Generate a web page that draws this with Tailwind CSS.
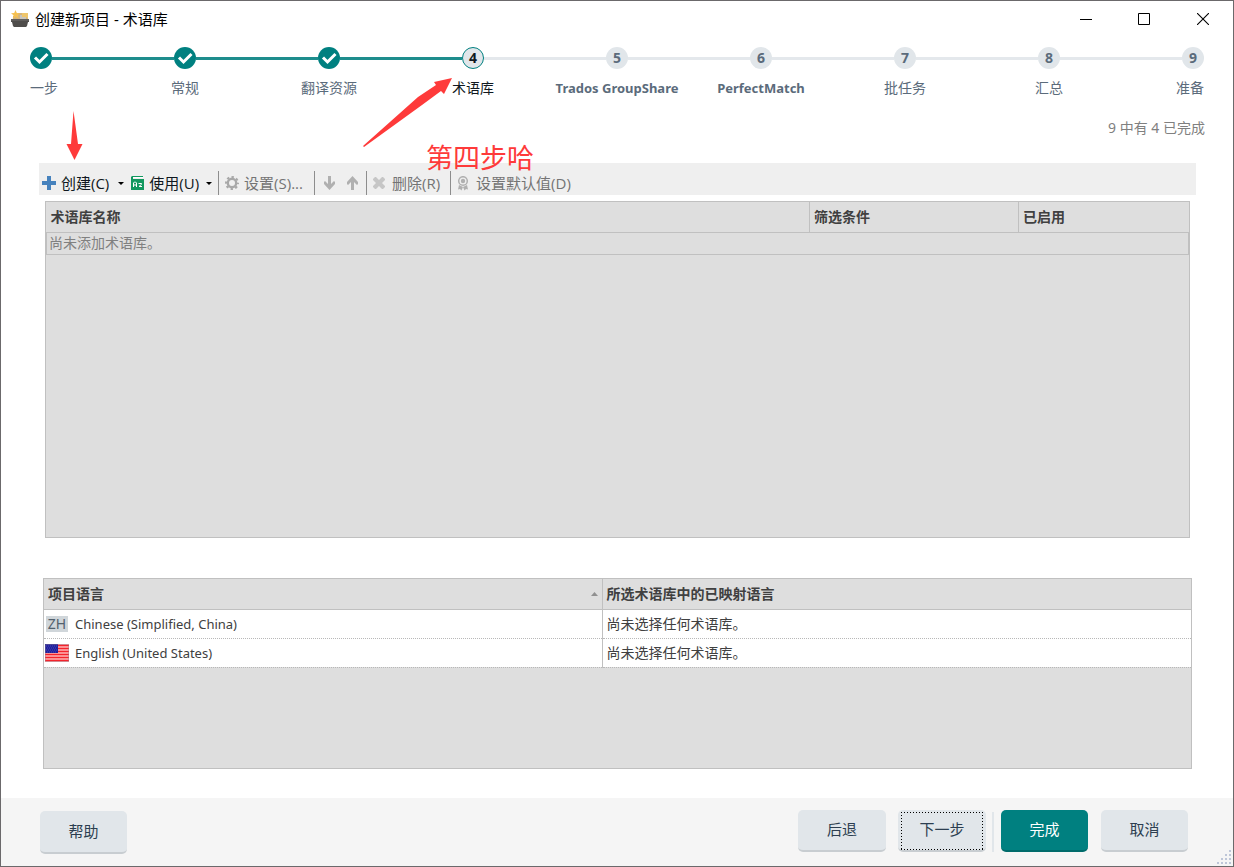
<!DOCTYPE html>
<html lang="zh-CN">
<head>
<meta charset="utf-8">
<meta name="viewport" content="width=device-width, initial-scale=1">
<title>创建新项目 - 术语库</title>
<script src="https://cdn.jsdelivr.net/npm/@tailwindcss/browser@4"></script>
</head>
<body class="bg-white font-['Noto_Sans','Noto_Sans_CJK_SC',sans-serif] text-[14px] leading-5 text-[#404040]">
<div class="relative flex min-h-screen flex-col border border-[#6b696b]">

  <!-- Title bar -->
  <header class="flex h-9 items-center justify-between pr-3 pl-[10px] text-black">
    <div class="flex items-center gap-[6px]">
      <svg class="h-[18px] w-[18px]" viewBox="0 0 18 18" aria-hidden="true">
        <path d="M7 3h9l1 1v7H2V6h4z" fill="#d5b47a"/>
        <path d="M9 5h6v5H9z" fill="#c9c5bd"/><path d="M11 3h6v6l-2-2h-4z" fill="#efc66b"/>
        <path d="M4.500 0l1.300 3 3.200.3-2.400 2 .8 3.200-2.900-1.700-2.800 1.700.8-3.200L0 3.300 3.200 3z" fill="#f5c04f"/>
        <path d="M0 9h18v3h-1l-1 4-1 1H3l-1-1-1-4H0z" fill="#4f4d4b"/><path d="M0 9h18v2H0z" fill="#5f5d5b"/>
      </svg>
      <h1 class="text-[15px]">创建新项目 - 术语库</h1>
    </div>
    <div class="flex">
      <button aria-label="最小化" class="grid w-[58px] place-items-center"><svg class="size-3" viewBox="0 0 12 12"><path d="M0 6.500h12" stroke="#000"/></svg></button>
      <button aria-label="最大化" class="grid w-[58px] place-items-center"><svg class="size-3" viewBox="0 0 12 12"><path d="M.5.5h11v11H.5z" fill="none" stroke="#000"/></svg></button>
      <button aria-label="关闭" class="ml-3 grid w-9 place-items-center"><svg class="size-3" viewBox="0 0 12 12"><path d="M0 0l12 12M12 0L0 12" stroke="#000" stroke-width="1.100"/></svg></button>
    </div>
  </header>

  <!-- Wizard steps -->
  <ol class="mt-[10px] flex pr-[29px] pl-[29px] text-[13px] font-bold text-[#5b6b7b]">
    <li class="flex-1">
      <div class="flex items-center"><svg class="size-[22px]" viewBox="0 0 22 22"><circle cx="11" cy="11" r="11" fill="#008080"/><path d="M5 10.500l4.500 4.500 8-8" fill="none" stroke="#fff" stroke-width="3"/></svg><div class="h-[3px] flex-1 bg-[#1e8d8d]"></div></div>
      <div class="mt-[9px] flex w-[22px] justify-start text-[14px] font-normal whitespace-nowrap">一步</div>
    </li>
    <li class="flex-1">
      <div class="flex items-center"><svg class="size-[22px]" viewBox="0 0 22 22"><circle cx="11" cy="11" r="11" fill="#008080"/><path d="M5 10.500l4.500 4.500 8-8" fill="none" stroke="#fff" stroke-width="3"/></svg><div class="h-[3px] flex-1 bg-[#1e8d8d]"></div></div>
      <div class="mt-[9px] flex w-[22px] justify-center text-[14px] font-normal whitespace-nowrap">常规</div>
    </li>
    <li class="flex-1">
      <div class="flex items-center"><svg class="size-[22px]" viewBox="0 0 22 22"><circle cx="11" cy="11" r="11" fill="#008080"/><path d="M5 10.500l4.500 4.500 8-8" fill="none" stroke="#fff" stroke-width="3"/></svg><div class="h-[3px] flex-1 bg-[#1e8d8d]"></div></div>
      <div class="mt-[9px] flex w-[22px] justify-center text-[14px] font-normal whitespace-nowrap">翻译资源</div>
    </li>
    <li class="flex-1 text-[#101820]" aria-current="step">
      <div class="flex items-center"><span class="grid size-[22px] place-items-center rounded-full border border-[#008080] bg-[#e1e6ea] text-[14px]">4</span><div class="h-[3px] flex-1 bg-[#e4e8ec]"></div></div>
      <div class="mt-[9px] flex w-[22px] justify-center text-[14px] font-normal whitespace-nowrap">术语库</div>
    </li>
    <li class="flex-1">
      <div class="flex items-center"><span class="grid size-[22px] place-items-center rounded-full bg-[#e1e6ea] text-[14px]">5</span><div class="h-[3px] flex-1 bg-[#e4e8ec]"></div></div>
      <div class="mt-[9px] flex w-[22px] justify-center whitespace-nowrap">Trados GroupShare</div>
    </li>
    <li class="flex-1">
      <div class="flex items-center"><span class="grid size-[22px] place-items-center rounded-full bg-[#e1e6ea] text-[14px]">6</span><div class="h-[3px] flex-1 bg-[#e4e8ec]"></div></div>
      <div class="mt-[9px] flex w-[22px] justify-center whitespace-nowrap">PerfectMatch</div>
    </li>
    <li class="flex-1">
      <div class="flex items-center"><span class="grid size-[22px] place-items-center rounded-full bg-[#e1e6ea] text-[14px]">7</span><div class="h-[3px] flex-1 bg-[#e4e8ec]"></div></div>
      <div class="mt-[9px] flex w-[22px] justify-center text-[14px] font-normal whitespace-nowrap">批任务</div>
    </li>
    <li class="flex-1">
      <div class="flex items-center"><span class="grid size-[22px] place-items-center rounded-full bg-[#e1e6ea] text-[14px]">8</span><div class="h-[3px] flex-1 bg-[#e4e8ec]"></div></div>
      <div class="mt-[9px] flex w-[22px] justify-center text-[14px] font-normal whitespace-nowrap">汇总</div>
    </li>
    <li>
      <span class="grid size-[22px] place-items-center rounded-full bg-[#e1e6ea] text-[14px]">9</span>
      <div class="mt-[9px] flex w-[22px] justify-end text-[14px] font-normal whitespace-nowrap">准备</div>
    </li>
  </ol>
  <p class="mt-5 pr-[28px] text-right text-[14px] text-[#808080]">9 中有 4 已完成</p>

  <main class="flex flex-1 flex-col pt-[25px]">
    <!-- Toolbar -->
    <div role="toolbar" class="mr-[37px] ml-[38px] flex h-8 items-center bg-[#efefef] pt-2 font-['Open_Sans','Noto_Sans_CJK_SC',sans-serif] text-[15px] whitespace-nowrap text-[#101820]">
      <button class="flex items-center gap-[5px] pl-[3px]">
        <svg class="size-[14px]" viewBox="0 0 14 14"><path d="M5 0h4v5h5v4H9v5H5V9H0V5h5z" fill="#4682bd"/></svg>
        <span>创建(C)</span>
        <svg class="ml-1 h-[3px] w-[6px]" viewBox="0 0 6 3"><path d="M0 0h6L3 3z" fill="#000"/></svg>
      </button>
      <button class="ml-[7px] flex items-center gap-[5px]">
        <svg class="h-[14px] w-[13px]" viewBox="0 0 13 14"><path d="M1 0h11v1H2v2h11v11H0V1z" fill="#12985f"/><path d="M2 1h10v1H2z" fill="#fff"/><path d="M2.500 11V7l1-1h1l1 1v4M2.500 9h3M7.500 7.500h3v.8L8 10.500h3" fill="none" stroke="#fff"/></svg>
        <span>使用(U)</span>
        <svg class="ml-[2px] h-[3px] w-[6px]" viewBox="0 0 6 3"><path d="M0 0h6L3 3z" fill="#000"/></svg>
      </button>
      <span class="ml-[6px] h-6 w-px bg-[#8d8d8d]"></span>
      <button disabled class="ml-[6px] flex items-center gap-[5px] text-[#747474]">
        <svg class="size-[14px]" viewBox="0 0 14 14"><circle cx="7" cy="7" r="4.200" fill="none" stroke="#a8a8a8" stroke-width="2.400"/><circle cx="7" cy="7" r="6" fill="none" stroke="#a8a8a8" stroke-width="2" stroke-dasharray="2.360 2.352" stroke-dashoffset="1.180"/></svg>
        <span>设置(S)...</span>
      </button>
      <span class="ml-[11px] h-6 w-px bg-[#8d8d8d]"></span>
      <button disabled aria-label="下移" class="ml-[9px]"><svg class="h-[14px] w-[11px]" viewBox="0 0 11 14"><path d="M4 0h3v8l3-3 1 1v2l-5.500 6L0 8V6l1-1 3 3z" fill="#b0b0b0"/></svg></button>
      <button disabled aria-label="上移" class="ml-3"><svg class="h-[14px] w-[11px]" viewBox="0 0 11 14"><path d="M4 14h3V6l3 3 1-1V6L5.500 0 0 6v2l1 1 3-3z" fill="#b0b0b0"/></svg></button>
      <span class="ml-[8px] h-6 w-px bg-[#8d8d8d]"></span>
      <button disabled class="ml-[6px] flex items-center gap-[7px] text-[#747474]">
        <svg class="size-3" viewBox="0 0 12 12"><path d="M2 0h1l3 3 3-3h1l2 2v1L9 6l3 3v1l-2 2H9L6 9l-3 3H2l-2-2V9l3-3-3-3V2z" fill="#c6c6c6"/></svg>
        <span>删除(R)</span>
      </button>
      <span class="ml-[10px] h-6 w-px bg-[#8d8d8d]"></span>
      <button disabled class="ml-[6px] flex items-center gap-[7px] text-[#747474]">
        <svg class="h-[15px] w-3" viewBox="0 0 12 15"><circle cx="6" cy="5" r="4.300" fill="none" stroke="#b0b0b0" stroke-width="1.500"/><circle cx="6" cy="5" r="2.200" fill="#b0b0b0"/><path d="M2 9l4 2-1.500 3.500L3 13l-2 .5zM10 9l-4 2 1.500 3.500L9 13l2 .5z" fill="#b0b0b0"/></svg>
        <span>设置默认值(D)</span>
      </button>
    </div>

    <!-- Termbases -->
    <div class="mt-[6px] mr-[43px] ml-[44px] flex-1 border border-[#c0c0c0] bg-[#dedede]">
      <table class="w-full table-fixed border-collapse text-left">
        <colgroup><col><col class="w-[209px]"><col class="w-[170px]"></colgroup>
        <thead><tr class="h-[30px] border-b border-[#c0c0c0]">
          <th class="border-r border-[#c0c0c0] pl-1">术语库名称</th><th class="border-r border-[#c0c0c0] pl-1">筛选条件</th><th class="pl-1">已启用</th>
        </tr></thead>
        <tbody><tr class="h-[22px] border border-t-0 border-[#c0c0c0]"><td colspan="3" class="pl-[2px] text-[#808080]">尚未添加术语库。</td></tr></tbody>
      </table>
    </div>

    <!-- Language mapping -->
    <div class="mt-10 mr-[41px] mb-[29px] ml-[42px] min-h-[191px] border border-[#c0c0c0] bg-[#dedede]">
      <table class="w-full table-fixed border-collapse text-left">
        <colgroup><col class="w-[558px]"><col></colgroup>
        <thead><tr class="h-[30px] border-b border-[#c0c0c0]">
          <th aria-sort="ascending" class="border-r border-[#c0c0c0] pr-1 pl-1"><span class="flex items-center justify-between">项目语言<svg class="h-1 w-[7px]" viewBox="0 0 7 4"><path d="M0 4h7L3.500 0z" fill="#909090"/></svg></span></th>
          <th class="pl-1">所选术语库中的已映射语言</th>
        </tr></thead>
        <tbody class="bg-white">
          <tr class="h-[29px] border-b border-dotted border-[#b8b8b8]">
            <td class="border-r border-[#c0c0c0] pl-[2px] [border-right-style:solid]"><span class="flex items-center gap-[7px] text-[13px]"><span class="grid h-4 w-[22px] place-items-center bg-[#d0d6da] text-[14px] leading-4 text-[#53616d]">ZH</span>Chinese (Simplified, China)</span></td>
            <td class="pl-1">尚未选择任何术语库。</td>
          </tr>
          <tr class="h-[29px] border-b border-dotted border-[#b8b8b8]">
            <td class="border-r border-[#c0c0c0] pl-px [border-right-style:solid]"><span class="flex items-center gap-[6px] text-[13px]"><svg class="h-[18px] w-6" viewBox="0 0 24 18" role="img" aria-label="US"><path d="M0 0h24v18H0z" fill="#ffb4b4"/><path d="M0 1.500h24M0 4.500h24M0 7.500h24M0 10.500h24M0 13.500h24M0 16.500h24" stroke="#f4242c" stroke-width="1.700"/><path d="M0 0h13v9H0z" fill="#20209c"/><path d="M1 2h11M2 4h10M1 6h11M2 8h10" stroke="#4848b4" stroke-dasharray="1 1"/><path d="M.5.5h23v17H.5z" fill="none" stroke="#908090" stroke-opacity=".4"/></svg>English (United States)</span></td>
            <td class="pl-1">尚未选择任何术语库。</td>
          </tr>
        </tbody>
      </table>
    </div>
  </main>

  <!-- Wizard buttons -->
  <footer class="flex h-[68px] items-start justify-between bg-[#f5f5f5] pt-3 pr-[45px] pl-[39px] text-[15px] text-[#2c3e50]">
    <button class="mt-px h-[43px] w-[87px] rounded-[5px] border-b-2 border-[#c8cdd1] bg-[#e1e6ea] pb-[2px]">帮助</button>
    <div class="flex">
      <button class="h-[42px] w-[88px] rounded-[5px] border-b-2 border-[#c8cdd1] bg-[#e1e6ea] pb-[2px]">后退</button>
      <button class="relative ml-3 h-[42px] w-[88px] rounded-[5px] border-b-2 border-[#c8cdd1] bg-[#e1e6ea] pb-[2px]">下一步<svg class="absolute top-[2px] left-[3px] h-[38px] w-[82px]" viewBox="0 0 82 38" shape-rendering="crispEdges" aria-hidden="true"><path d="M0 .5h82M0 37.500h82M.5 0v38M81.500 0v38" fill="none" stroke="#000" stroke-width="1" stroke-dasharray="1 2"/></svg></button>
      <span class="mt-[2px] ml-[6px] h-10 w-[2px] bg-[#e1e6ea]"></span>
      <button class="ml-[7px] h-[42px] w-[87px] rounded-[5px] border-b-2 border-[#006b6b] bg-[#008080] pb-[2px] text-white">完成</button>
      <button class="ml-[13px] h-[42px] w-[87px] rounded-[5px] border-b-2 border-[#c8cdd1] bg-[#e1e6ea] pb-[2px]">取消</button>
    </div>
  </footer>

  <!-- Resize grip -->
  <svg class="absolute right-[2px] bottom-[2px] size-[14px]" viewBox="0 0 14 14" aria-hidden="true"><path d="M12 0h2v2h-2zM8 4h2v2H8zM12 4h2v2h-2zM4 8h2v2H4zM8 8h2v2H8zM12 8h2v2h-2zM0 12h2v2H0zM4 12h2v2H4zM8 12h2v2H8zM12 12h2v2h-2z" fill="#bec6d8"/></svg>

  <!-- Hand-drawn notes over the window -->
  <svg class="pointer-events-none absolute top-[109px] left-[64px] h-[51px] w-[18px]" viewBox="0 0 18 51" aria-hidden="true"><path d="M8.500 1l4.500 33h4.500L9.500 50 1.500 34H6z" fill="#fe3a3a"/></svg>
  <svg class="pointer-events-none absolute top-[76px] left-[362px] h-[72px] w-[92px]" viewBox="0 0 92 72" aria-hidden="true"><path d="M89 1L71 5l2 3-18 12L0 69l1 1 58-42 19-14 3 3z" fill="#fe3a3a"/></svg>
  <p class="pointer-events-none absolute top-[143px] left-[425px] text-[27px] leading-7 whitespace-nowrap text-[#fe3a3a]">第四步哈</p>
</div>
</body>
</html>
